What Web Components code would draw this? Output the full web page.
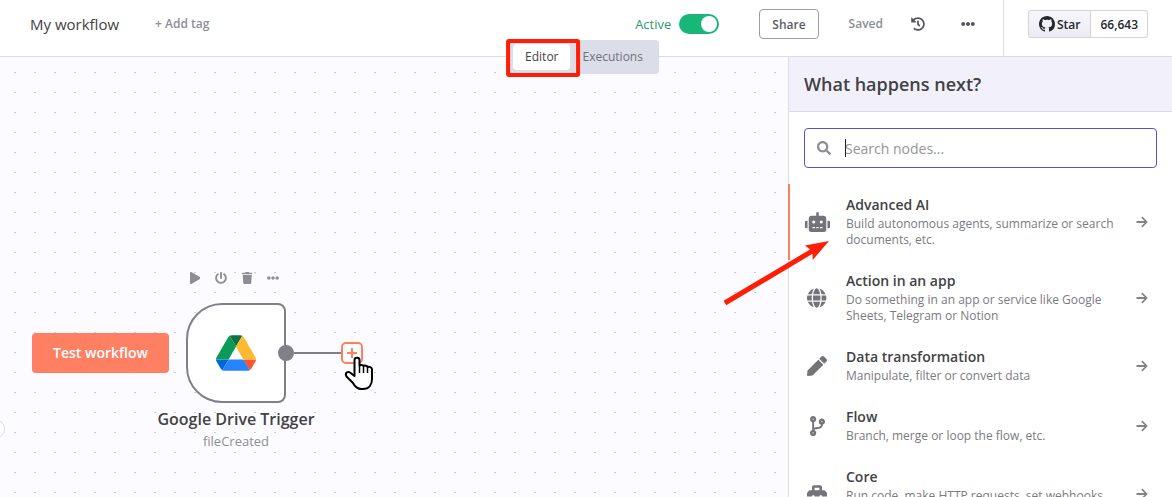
<!DOCTYPE html>
<html lang="en">
<head>
<meta charset="utf-8">
<meta name="viewport" content="width=device-width, initial-scale=1">
<title>My workflow</title>
<style>
	:root {
		--text-dark: #414244;
		--text-base: #5b5b66;
		--text-light: #8d8e98;
		--border: #dbdce6;
		--primary: #ff7f62;
		--secondary: #5a4fcf;
		--mark: #ff1e05;
	}
	body {
		margin: 0;
		font-family: "Open Sans", "Noto Sans", sans-serif;
		font-size: 14px;
		color: var(--text-dark);
	}
</style>
</head>
<body>
<workflow-app></workflow-app>

<script>
const ICONS = {
	robot: ['0 0 640 512', 'M32,224H64V416H32A32,32,0,0,1,0,384V256A32,32,0,0,1,32,224Zm512-48V448a64,64,0,0,1-64,64H160a64,64,0,0,1-64-64V176a80,80,0,0,1,80-80H288V32a32,32,0,0,1,64,0V96H464A80,80,0,0,1,544,176ZM264,256a40,40,0,1,0-40,40A40,40,0,0,0,264,256Zm-8,128H192v32h64Zm96,0H288v32h64ZM456,256a40,40,0,1,0-40,40A40,40,0,0,0,456,256Zm-8,128H384v32h64ZM640,256V384a32,32,0,0,1-32,32H576V224h32A32,32,0,0,1,640,256Z'],
	globe: ['0 0 496 512', 'M336.5 160C322 70.7 287.8 8 248 8s-74 62.7-88.5 152h177zM152 256c0 22.2 1.2 43.5 3.3 64h185.3c2.1-20.5 3.3-41.8 3.3-64s-1.2-43.5-3.3-64H155.3c-2.1 20.5-3.3 41.8-3.3 64zm324.7-96c-28.6-67.9-86.5-120.4-158-141.6 24.4 33.8 41.2 84.7 50 141.6h108zM177.2 18.4C105.8 39.6 47.8 92.1 19.3 160h108c8.7-56.9 25.5-107.8 49.9-141.6zM487.4 192H372.7c2.1 21 3.3 42.5 3.3 64s-1.2 43-3.3 64h114.6c5.5-20.5 8.6-41.8 8.6-64s-3.1-43.5-8.5-64zM120 256c0-21.5 1.2-43 3.3-64H8.6C3.2 212.5 0 233.8 0 256s3.2 43.5 8.6 64h114.6c-2-21-3.2-42.5-3.2-64zm39.5 96c14.5 89.3 48.7 152 88.5 152s74-62.7 88.5-152h-177zm159.3 141.6c71.4-21.2 129.4-73.7 158-141.6h-108c-8.8 56.9-25.6 107.8-50 141.6zM19.3 352c28.6 67.9 86.5 120.4 158 141.6-24.4-33.8-41.2-84.7-50-141.6h-108z'],
	pen: ['0 0 512 512', 'M290.74 93.24l128.02 128.02-277.99 277.99-114.14 12.6C11.35 513.54-1.56 500.62.14 485.34l12.7-114.22 277.9-277.88zm207.2-19.06l-60.11-60.11c-18.75-18.75-49.16-18.75-67.91 0l-56.55 56.55 128.02 128.02 56.55-56.55c18.75-18.76 18.75-49.16 0-67.91z'],
	branch: ['0 0 384 512', 'M384 144c0-44.2-35.8-80-80-80s-80 35.8-80 80c0 36.4 24.3 67.1 57.5 76.8-.6 16.1-4.2 28.5-11 36.9-15.4 19.2-49.3 22.4-85.2 25.7-28.2 2.6-57.4 5.4-81.3 16.9v-144c32.5-10.2 56-40.5 56-76.3 0-44.2-35.8-80-80-80S0 35.8 0 80c0 35.8 23.5 66.1 56 76.3v199.3C23.5 365.9 0 396.2 0 432c0 44.2 35.8 80 80 80s80-35.8 80-80c0-34-21.2-63.1-51.2-74.6 3.1-5.2 7.8-9.8 14.9-13.4 16.2-8.2 40.4-10.4 66.1-12.8 42.2-3.9 90-8.4 118.2-43.4 14-17.4 21.1-39.8 21.6-67.9 31.6-10.8 54.4-40.7 54.4-75.9zM80 64c8.8 0 16 7.2 16 16s-7.2 16-16 16-16-7.2-16-16 7.2-16 16-16zm0 384c-8.8 0-16-7.2-16-16s7.2-16 16-16 16 7.2 16 16-7.2 16-16 16zm224-320c8.8 0 16 7.2 16 16s-7.2 16-16 16-16-7.2-16-16 7.2-16 16-16z'],
	toolbox: ['0 0 512 512', 'M502.63 214.63l-45.25-45.25c-6-6-14.14-9.37-22.63-9.37H384V80c0-26.51-21.49-48-48-48H176c-26.51 0-48 21.49-48 48v80H77.25c-8.49 0-16.62 3.37-22.63 9.37L9.37 214.63c-6 6-9.37 14.14-9.37 22.63V320h128v-16c0-8.84 7.16-16 16-16h32c8.84 0 16 7.16 16 16v16h128v-16c0-8.84 7.16-16 16-16h32c8.84 0 16 7.16 16 16v16h128v-82.75c0-8.48-3.37-16.62-9.37-22.62zM320 160H192V96h128v64zm64 208c0 8.84-7.16 16-16 16h-32c-8.84 0-16-7.16-16-16v-16H192v16c0 8.84-7.16 16-16 16h-32c-8.84 0-16-7.16-16-16v-16H0v96c0 17.67 14.33 32 32 32h448c17.67 0 32-14.33 32-32v-96H384v16z'],
	search: ['0 0 512 512', 'M505 442.7L405.3 343c-4.5-4.5-10.6-7-17-7H372c27.6-35.3 44-79.7 44-128C416 93.1 322.9 0 208 0S0 93.1 0 208s93.1 208 208 208c48.3 0 92.7-16.4 128-44v16.3c0 6.4 2.5 12.5 7 17l99.7 99.7c9.4 9.4 24.6 9.4 33.9 0l28.3-28.3c9.4-9.4 9.4-24.6.1-34zM208 336c-70.7 0-128-57.2-128-128 0-70.7 57.2-128 128-128 70.7 0 128 57.2 128 128 0 70.7-57.2 128-128 128z'],
	history: ['0 0 512 512', 'M504 255.531c.253 136.64-111.18 248.372-247.82 248.468-59.015.042-113.223-20.53-155.822-54.911-11.077-8.94-11.905-25.541-1.839-35.607l11.267-11.267c8.609-8.609 22.353-9.551 31.891-1.984C173.062 425.135 212.781 440 256 440c101.705 0 184-82.311 184-184 0-101.705-82.311-184-184-184-48.814 0-93.149 18.969-126.068 49.932l50.754 50.754c10.08 10.08 2.941 27.314-11.313 27.314H24c-8.837 0-16-7.163-16-16V38.627c0-14.254 17.234-21.393 27.314-11.314l49.372 49.372C129.209 34.136 189.552 8 256 8c136.81 0 247.747 110.78 248 247.531zm-180.912 78.784l9.823-12.63c8.138-10.463 6.253-25.542-4.21-33.679L288 256.349V152c0-13.255-10.745-24-24-24h-16c-13.255 0-24 10.745-24 24v135.651l65.409 50.874c10.463 8.137 25.541 6.253 33.679-4.21z'],
	dots: ['0 0 512 512', 'M328 256c0 39.8-32.2 72-72 72s-72-32.2-72-72 32.2-72 72-72 72 32.2 72 72zm104-72c-39.8 0-72 32.2-72 72s32.2 72 72 72 72-32.2 72-72-32.2-72-72-72zm-352 0c-39.8 0-72 32.2-72 72s32.2 72 72 72 72-32.2 72-72-32.2-72-72-72z'],
	play: ['0 0 448 512', 'M424.4 214.7L72.4 6.6C43.8-10.3 0 6.1 0 47.9V464c0 37.5 40.7 60.1 72.4 41.3l352-208c31.4-18.5 31.5-64.1 0-82.6z'],
	power: ['0 0 512 512', 'M400 54.1c63 45 104 118.6 104 201.9 0 136.8-110.8 247.7-247.5 248C120 504.3 8.2 393 8 256.4 7.9 173.1 48.9 99.3 111.8 54.2c11.7-8.3 28-4.8 35 7.7L162.6 90c5.9 10.5 3.1 23.8-6.6 31-41.5 30.8-68 79.6-68 134.9-.1 92.3 74.5 168.1 168 168.1 91.6 0 168.6-74.2 168-169.1-.3-51.8-24.7-101.8-68.1-134-9.7-7.2-12.4-20.5-6.5-30.9l15.8-28.1c7-12.4 23.2-16.1 34.8-7.8zM296 264V24c0-13.3-10.7-24-24-24h-32c-13.3 0-24 10.7-24 24v240c0 13.3 10.7 24 24 24h32c13.3 0 24-10.7 24-24z'],
	trash: ['0 0 448 512', 'M432 32H312l-9.4-18.7A24 24 0 0 0 281.1 0H166.8a23.72 23.72 0 0 0-21.4 13.3L136 32H16A16 16 0 0 0 0 48v32a16 16 0 0 0 16 16h416a16 16 0 0 0 16-16V48a16 16 0 0 0-16-16zM53.2 467a48 48 0 0 0 47.9 45h245.8a48 48 0 0 0 47.9-45L416 128H32z'],
	github: ['0 0 16 16', 'M8 0C3.58 0 0 3.58 0 8c0 3.54 2.29 6.53 5.47 7.59.4.07.55-.17.55-.38 0-.19-.01-.82-.01-1.49-2.01.37-2.53-.49-2.69-.94-.09-.23-.48-.94-.82-1.13-.28-.15-.68-.52-.01-.53.63-.01 1.08.58 1.23.82.72 1.21 1.87.87 2.33.66.07-.52.28-.87.51-1.07-1.78-.2-3.64-.89-3.64-3.95 0-.87.31-1.59.82-2.15-.08-.2-.36-1.02.08-2.12 0 0 .67-.21 2.2.82.64-.18 1.32-.27 2-.27.68 0 1.36.09 2 .27 1.53-1.04 2.2-.82 2.2-.82.44 1.1.16 1.92.08 2.12.51.56.82 1.27.82 2.15 0 3.07-1.87 3.75-3.65 3.95.29.25.54.73.54 1.48 0 1.07-.01 1.93-.01 2.2 0 .21.15.46.55.38A8.013 8.013 0 0016 8c0-4.42-3.58-8-8-8z'],
	arrow: ['0 0 12 12', 'M6.400 .6 11.800 6l-5.400 5.400-1.200-1.200 3.300-3.300H.5V5.100h8L5.200 1.800z'],
	plus: ['0 0 12 12', 'M5 1h2v4h4v2H7v4H5V7H1V5h4z'],
};

class AppIcon extends HTMLElement {
	connectedCallback() {
		const [box, path] = ICONS[this.getAttribute('name')];
		const size = this.getAttribute('size') || '16';

		this.attachShadow({ mode: 'open' });
		this.shadowRoot.innerHTML = `
		<style>
		:host { display: inline-flex; flex: none; }
		svg { display: block; height: ${size}px; width: auto; fill: currentColor; }
		</style>
		<svg viewBox="${box}" aria-hidden="true"><path d="${path}"/></svg>
	`;
	}
}
customElements.define('app-icon', AppIcon);

class ActiveToggle extends HTMLElement {
	connectedCallback() {
		this.attachShadow({ mode: 'open' });
		this.shadowRoot.innerHTML = `
		<style>
		:host { display: flex; align-items: center; gap: 8px; }
		label { font-size: 13px; line-height: 20px; color: #2f9871; }
		input {
			appearance: none;
			margin: 0;
			width: 40px;
			height: 20px;
			box-sizing: border-box;
			padding: 2px;
			border-radius: 10px;
			background: #c3c5d3;
			display: flex;
			cursor: pointer;
		}
		input::before {
			content: "";
			width: 16px;
			height: 16px;
			border-radius: 50%;
			background: #fff;
		}
		input:checked { background: #17b877; justify-content: flex-end; }
		</style>
		<label for="active"><slot></slot></label>
		<input id="active" type="checkbox" role="switch" checked>
	`;
	}
}
customElements.define('active-toggle', ActiveToggle);

class GithubButton extends HTMLElement {
	connectedCallback() {
		const count = this.getAttribute('count');

		this.attachShadow({ mode: 'open' });
		this.shadowRoot.innerHTML = `
		<style>
		:host { display: flex; }
		a {
			display: flex;
			align-items: center;
			gap: 2px;
			height: 26px;
			border: 1px solid #d0d3e2;
			color: #24292f;
			font-size: 12px;
			font-weight: 600;
			text-decoration: none;
		}
		.star {
			padding: 0 10px;
			border-radius: 3px 0 0 3px;
			background: linear-gradient(#f7f7fc, #ecebf3);
		}
		.count {
			padding: 0 9px;
			border-left: 0;
			border-radius: 0 3px 3px 0;
			background: #fff;
		}
		</style>
		<a class="star" href="#star"><app-icon name="github" size="16"></app-icon><slot></slot></a>
		<a class="count" href="#stargazers">${count}</a>
	`;
	}
}
customElements.define('github-button', GithubButton);

class WorkflowTabs extends HTMLElement {
	connectedCallback() {
		this.attachShadow({ mode: 'open' });
		this.shadowRoot.innerHTML = `
		<style>
		:host {
			display: flex;
			padding: 4px;
			border-radius: 4px;
			background: #dbdde9;
		}
		button {
			height: 26px;
			margin: 0;
			padding: 0 12px;
			border: 0;
			border-radius: 4px;
			background: none;
			color: #71717d;
			font: 12px/26px "Open Sans", "Noto Sans", sans-serif;
			cursor: pointer;
		}
		button[aria-selected="true"] { background: #fff; color: var(--text-dark); }
		/* red frame drawn round the selected tab */
		.marked { position: relative; }
		.marked::after {
			content: "";
			position: absolute;
			inset: -5px -10px -7px -7px;
			border: 4px solid var(--mark);
			border-radius: 3px;
		}
		</style>
		<button class="marked" role="tab" aria-selected="true">Editor</button>
		<button role="tab" aria-selected="false">Executions</button>
	`;
	}
}
customElements.define('workflow-tabs', WorkflowTabs);

class MainHeader extends HTMLElement {
	connectedCallback() {
		this.attachShadow({ mode: 'open' });
		this.shadowRoot.innerHTML = `
		<style>
		:host {
			display: flex;
			position: relative;
			z-index: 2;
			height: 56px;
			background: #fff;
			border-bottom: 1px solid var(--border);
		}
		.bar {
			flex: 1;
			display: flex;
			align-items: center;
			justify-content: space-between;
			padding: 0 28px 8px 30px;
		}
		.side { display: flex; align-items: center; }
		.left { gap: 36px; }
		h1 { margin: 0; font-size: 15px; line-height: 24px; font-weight: 400; }
		button {
			margin: 0;
			padding: 0;
			border: 0;
			background: none;
			font-family: inherit;
			display: flex;
			align-items: center;
			cursor: pointer;
		}
		.tag, .saved { font-size: 12px; line-height: 20px; font-weight: 600; color: var(--text-light); }
		.share {
			height: 30px;
			margin: 0 30px 0 40px;
			padding: 0 12px;
			border: 1px solid #9c9cae;
			border-radius: 4px;
			color: var(--text-base);
			font-size: 12px;
			font-weight: 600;
		}
		.icon { margin-left: 28px; color: #555560; }
		.icon.more { margin-left: 36px; }
		.github {
			display: flex;
			align-items: center;
			padding: 0 24px 8px;
			border-left: 1px solid var(--border);
		}
		workflow-tabs {
			position: absolute;
			left: 50%;
			top: 40px;
			transform: translateX(-50%);
			margin-left: -2px;
		}
		</style>
		<div class="bar">
			<div class="side left">
				<h1>My workflow</h1>
				<button class="tag">+ Add tag</button>
			</div>
			<div class="side">
				<active-toggle>Active</active-toggle>
				<button class="share">Share</button>
				<span class="saved">Saved</span>
				<button class="icon" aria-label="Workflow history"><app-icon name="history" size="14"></app-icon></button>
				<button class="icon more" aria-label="More options"><app-icon name="dots" size="14"></app-icon></button>
			</div>
		</div>
		<div class="github"><github-button count="66,643">Star</github-button></div>
		<workflow-tabs role="tablist"></workflow-tabs>
	`;
	}
}
customElements.define('main-header', MainHeader);

class CanvasNode extends HTMLElement {
	connectedCallback() {
		const name = this.getAttribute('name');
		const subtitle = this.getAttribute('subtitle');

		this.attachShadow({ mode: 'open' });
		this.shadowRoot.innerHTML = `
		<style>
		:host {
			display: flex;
			flex-direction: column;
			align-items: center;
			width: 200px;
		}
		button { margin: 0; padding: 0; border: 0; background: none; cursor: pointer; }
		.tools { display: flex; align-items: center; height: 14px; margin-bottom: 18px; padding-right: 4px; }
		.tools button {
			display: flex;
			justify-content: center;
			width: 26px;
			color: #8d8d96;
		}
		.box {
			position: relative;
			display: flex;
			align-items: center;
			justify-content: center;
			box-sizing: border-box;
			width: 100px;
			height: 100px;
			border: 2px solid #808087;
			border-radius: 36px 8px 8px 36px;
			background: #fff;
		}
		.output {
			position: absolute;
			left: 90px;
			top: 37px;
			display: flex;
			align-items: center;
		}
		.dot { width: 16px; height: 16px; border-radius: 50%; background: #808087; }
		.line { width: 47px; height: 2px; background: #808087; }
		.add {
			display: flex;
			align-items: center;
			justify-content: center;
			box-sizing: border-box;
			width: 22px;
			height: 22px;
			border: 2px solid var(--primary);
			border-radius: 5px;
			background: #fff;
			color: var(--primary);
		}
		.name { margin-top: 5px; font-size: 16px; line-height: 22px; font-weight: 600; }
		.subtitle { margin-top: 2px; font-size: 13px; line-height: 18px; color: #8d8d96; }
		</style>
		<div class="tools">
			<button aria-label="Execute node"><app-icon name="play" size="12"></app-icon></button>
			<button aria-label="Deactivate node"><app-icon name="power" size="12"></app-icon></button>
			<button aria-label="Delete node"><app-icon name="trash" size="12"></app-icon></button>
			<button aria-label="Node options"><app-icon name="dots" size="12"></app-icon></button>
		</div>
		<div class="box">
			<slot></slot>
			<div class="output">
				<span class="dot"></span>
				<span class="line"></span>
				<button class="add" aria-label="Add node"><app-icon name="plus" size="12"></app-icon></button>
			</div>
		</div>
		<div class="name">${name}</div>
		<div class="subtitle">${subtitle}</div>
	`;
	}
}
customElements.define('canvas-node', CanvasNode);

class WorkflowCanvas extends HTMLElement {
	connectedCallback() {
		this.attachShadow({ mode: 'open' });
		this.shadowRoot.innerHTML = `
		<style>
		:host {
			display: block;
			position: relative;
			overflow: hidden;
			background-color: #fcfbff;
			background-image: url("data:image/svg+xml,%3Csvg xmlns='http://www.w3.org/2000/svg' width='20' height='20'%3E%3Crect x='14' y='15' width='2' height='1' fill='%23cccdd4'/%3E%3C/svg%3E");
		}
		canvas-node { position: absolute; left: 136px; top: 214px; }
		.run {
			position: absolute;
			left: 32px;
			top: 276px;
			height: 40px;
			padding: 0 21px;
			border: 0;
			border-radius: 4px;
			background: var(--primary);
			color: #fff;
			font: 600 14px/40px "Open Sans", "Noto Sans", sans-serif;
			cursor: pointer;
		}
		.edge {
			position: absolute;
			left: -15px;
			top: 362px;
			width: 18px;
			height: 18px;
			border: 1px solid #dfdfe6;
			border-radius: 50%;
			background: #fff;
		}
		.pointer { position: absolute; left: 344px; top: 299px; }
		</style>
		<span class="edge"></span>
		<canvas-node name="Google Drive Trigger" subtitle="fileCreated">
			<svg width="40" height="36" viewBox="0 0 87.3 78" aria-hidden="true">
				<path fill="#0066da" d="m6.6 66.85 3.85 6.65c.8 1.4 1.95 2.5 3.3 3.3l13.75-23.8h-27.5c0 1.55.4 3.1 1.2 4.5z"/>
				<path fill="#0b9a58" d="m43.65 25-13.75-23.8c-1.35.8-2.5 1.9-3.3 3.3l-25.4 44a9.06 9.06 0 0 0 -1.2 4.5h27.5z"/>
				<path fill="#ff5336" d="m73.55 76.8c1.35-.8 2.5-1.9 3.3-3.3l1.6-2.75 7.65-13.25c.8-1.4 1.2-2.95 1.2-4.5h-27.502l5.852 11.5z"/>
				<path fill="#0a7340" d="m43.65 25 13.75-23.8c-1.35-.8-2.9-1.2-4.5-1.2h-18.5c-1.6 0-3.15.45-4.5 1.2z"/>
				<path fill="#2684fc" d="m59.8 53h-32.3l-13.75 23.8c1.35.8 2.9 1.2 4.5 1.2h50.8c1.6 0 3.15-.45 4.5-1.2z"/>
				<path fill="#ffba30" d="m73.4 26.5-12.7-22c-.8-1.4-1.95-2.5-3.3-3.3l-13.75 23.8 16.15 28h27.45c0-1.55-.4-3.1-1.2-4.5z"/>
			</svg>
		</canvas-node>
		<button class="run">Test workflow</button>
		<svg class="pointer" width="30" height="36" viewBox="0 0 30 36" aria-hidden="true">
			<path d="M10.500 20V4c0-3 5-3 5 0v5.500c1-1 4-.7 4 .5 1-.8 4-.3 4 1 1.500-.7 4.500 0 4.500 2.500V23c0 5.500-3 10-9 10h-1.500c-4.500 0-7-3-8.500-6L2.500 20.500C.5 17 3.500 15 6 16.500z" fill="#fff" stroke="#000" stroke-width="2" stroke-linejoin="round"/>
			<path d="M15.500 9v8M19.500 10v7M23.500 11v6" stroke="#000" stroke-width="1.500"/>
		</svg>
	`;
	}
}
customElements.define('workflow-canvas', WorkflowCanvas);

class CreatorItem extends HTMLElement {
	connectedCallback() {
		const icon = this.getAttribute('icon');
		const title = this.getAttribute('heading');

		this.attachShadow({ mode: 'open' });
		this.shadowRoot.innerHTML = `
		<style>
		:host { display: block; }
		button {
			display: flex;
			align-items: center;
			gap: 16px;
			width: 100%;
			margin: 0;
			padding: 12px 24px 12px 14px;
			border: 0;
			border-left: 2px solid transparent;
			background: none;
			font-family: inherit;
			text-align: left;
			cursor: pointer;
		}
		:host([active]) button { border-left-color: var(--primary); }
		.icon { flex: none; width: 26px; display: flex; justify-content: center; color: #737378; }
		.text { flex: 1; display: flex; flex-direction: column; gap: 2px; }
		.title { font-size: 14px; line-height: 18px; font-weight: 600; color: var(--text-dark); }
		.desc { font-size: 12px; line-height: 16px; color: #7b7b80; }
		.go { color: #838388; }
		</style>
		<button>
			<span class="icon"><app-icon name="${icon}" size="20"></app-icon></span>
			<span class="text">
				<span class="title">${title}</span>
				<span class="desc"><slot></slot></span>
			</span>
			<app-icon class="go" name="arrow" size="12"></app-icon>
		</button>
	`;
	}
}
customElements.define('creator-item', CreatorItem);

class NodeCreator extends HTMLElement {
	connectedCallback() {
		this.attachShadow({ mode: 'open' });
		this.shadowRoot.innerHTML = `
		<style>
		:host {
			display: flex;
			flex-direction: column;
			min-height: 0;
			background: #fff;
			box-shadow: inset 1px 0 var(--border);
		}
		h2 {
			margin: 0;
			padding: 15px;
			border: 1px solid var(--border);
			border-width: 0 0 1px 1px;
			background: #f2f0fa;
			font-size: 18px;
			line-height: 24px;
			font-weight: 600;
		}
		.search {
			position: relative;
			display: flex;
			align-items: center;
			gap: 14px;
			height: 38px;
			margin: 16px 15px 16px 16px;
			padding: 0 12px;
			border: 1px solid var(--secondary);
			border-radius: 4px;
			color: #8d8d92;
		}
		input {
			flex: 1;
			min-width: 0;
			padding: 2px 0 0;
			border: 0;
			outline: 0;
			background: none;
			color: var(--text-dark);
			font: 14px/20px "Open Sans", "Noto Sans", sans-serif;
		}
		input::placeholder { color: #949499; opacity: 1; }
		.caret {
			position: absolute;
			left: 40px;
			top: 10px;
			width: 1px;
			height: 18px;
			background: #222;
		}
		.list { flex: 1; min-height: 0; overflow: hidden; }
		</style>
		<h2>What happens next?</h2>
		<div class="search">
			<app-icon name="search" size="14"></app-icon>
			<input type="text" placeholder="Search nodes..." aria-label="Search nodes">
			<span class="caret"></span>
		</div>
		<div class="list"><slot></slot></div>
	`;
	}
}
customElements.define('node-creator', NodeCreator);

class WorkflowApp extends HTMLElement {
	connectedCallback() {
		this.attachShadow({ mode: 'open' });
		this.shadowRoot.innerHTML = `
		<style>
		:host {
			display: grid;
			grid-template-rows: auto minmax(0, 1fr);
			height: 100vh;
			overflow: hidden;
		}
		main {
			position: relative;
			display: grid;
			grid-template-columns: minmax(0, 1fr) 384px;
			min-height: 0;
		}
		/* red arrow that points at the first item of the list */
		.pointer { position: absolute; right: 340px; top: 180px; }
		</style>
		<main-header></main-header>
		<main>
			<workflow-canvas></workflow-canvas>
			<node-creator>
				<creator-item active icon="robot" heading="Advanced AI">Build autonomous agents, summarize or search documents, etc.</creator-item>
				<creator-item icon="globe" heading="Action in an app">Do something in an app or service like Google Sheets, Telegram or Notion</creator-item>
				<creator-item icon="pen" heading="Data transformation">Manipulate, filter or convert data</creator-item>
				<creator-item icon="branch" heading="Flow">Branch, merge or loop the flow, etc.</creator-item>
				<creator-item icon="toolbox" heading="Core">Run code, make HTTP requests, set webhooks, etc.</creator-item>
			</node-creator>
			<svg class="pointer" width="112" height="70" viewBox="0 0 112 70" aria-hidden="true">
				<path fill="#ff1e05" d="M109 4 85 8.500 90 12.500 3.600 63.800 6.200 68.200 92.500 16.800 92.700 23z"/>
			</svg>
		</main>
	`;
	}
}
customElements.define('workflow-app', WorkflowApp);
</script>
</body>
</html>
